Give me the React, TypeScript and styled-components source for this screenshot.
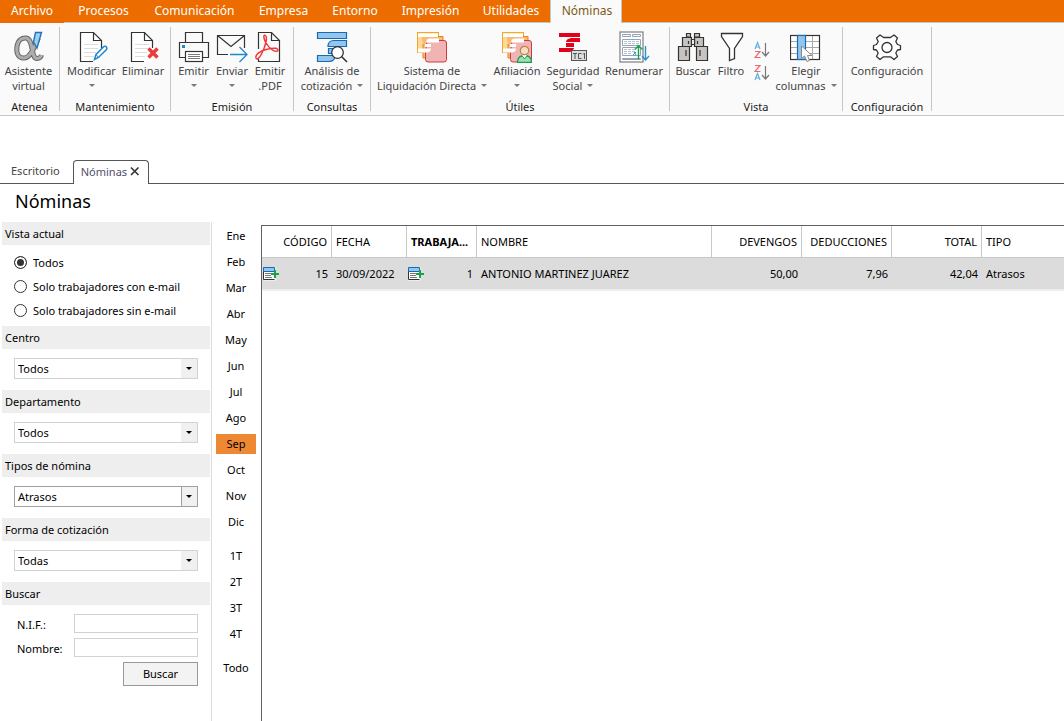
import React, { useState } from 'react';
import styled, { createGlobalStyle, css } from 'styled-components';

const GlobalStyle = createGlobalStyle`
  *, *::before, *::after { box-sizing: border-box; }
  html, body, #root { height: 100%; }
  body {
    margin: 0;
    background: #fff;
    color: #000;
    font-family: "Segoe UI", "Noto Sans", "Open Sans", sans-serif;
    font-size: 11px;
    line-height: 15px;
  }
  button, input, select { font: inherit; color: inherit; margin: 0; }
`;

const Page = styled.div`
  display: flex;
  flex-direction: column;
  min-height: 100%;
`;

/* ---------- main menu ---------- */

const MenuBar = styled.nav`
  display: flex;
  height: 23px;
  background: #ed6c00;
  border-bottom: 1px solid #c6c6c6;
`;

const MenuTab = styled.button<{ $width: number; $kind?: 'file' | 'active' }>`
  flex: none;
  width: ${p => p.$width}px;
  padding: 0 0 2px 2px;
  border: 0;
  height: 22px;
  background: none;
  color: #fff;
  font-size: 12px;
  text-align: center;
  white-space: nowrap;
  ${p => p.$kind === 'file' && css`
    height: 23px;
    padding-left: 0;
    background: #ed6c00;
  `}
  ${p => p.$kind === 'active' && css`
    height: 23px;
    background: #fafafa;
    color: #7d5a14;
    border-left: 1px solid #c6c6c6;
    border-right: 1px solid #c6c6c6;
  `}
`;

/* ---------- ribbon ---------- */

const Ribbon = styled.div`
  display: flex;
  height: 93px;
  padding-top: 4px;
  background: #fafafa;
  border-bottom: 1px solid #c6c6c6;
`;

const Group = styled.section<{ $width: number }>`
  flex: none;
  display: flex;
  flex-direction: column;
  width: ${p => p.$width}px;
  height: 84px;
  border-right: 1px solid #c6c6c6;
`;

const GroupItems = styled.div`
  flex: none;
  display: flex;
  height: 72px;
  padding: 4px 3px 0;
`;

const GroupLabel = styled.h2`
  margin: 0;
  line-height: 15px;
  text-align: center;
  font-size: 11px;
  font-weight: 400;
  color: #1a1a1a;
`;

const Tool = styled.button<{ $width: number }>`
  flex: none;
  display: flex;
  flex-direction: column;
  align-items: center;
  width: ${p => p.$width}px;
  padding: 0;
  border: 0;
  background: none;
  color: #444;
  white-space: nowrap;
`;

const ToolIcon = styled.svg.attrs({ viewBox: '0 0 32 32', 'aria-hidden': true })`
  display: block;
  width: 32px;
  height: 32px;
  fill: none;
`;

const ToolLine = styled.span`
  display: flex;
  align-items: center;
  justify-content: center;
  gap: 5px;
  height: 15px;
`;

const Caret = styled.span`
  border: 3px solid transparent;
  border-top-color: #777;
  border-bottom: 0;
`;

const SortStack = styled.div`
  flex: none;
  display: flex;
  flex-direction: column;
  gap: 5px;
  width: 26px;
  padding: 10px 0 0 5px;
`;

const SortButton = styled.button`
  display: block;
  width: 16px;
  height: 18px;
  padding: 0;
  border: 0;
  background: none;
  svg { display: block; }
`;

/* ---------- document tabs ---------- */

const DocTabs = styled.div`
  display: flex;
  align-items: flex-end;
  height: 68px;
  border-bottom: 1px solid #555;
`;

const DocTab = styled.div<{ $active?: boolean }>`
  display: flex;
  align-items: center;
  gap: 3px;
  height: 23px;
  padding: 0 13px 2px 11px;
  color: #444;
  ${p => p.$active && css`
    height: 24px;
    padding: 0 8px 3px 7px;
    margin-bottom: -1px;
    background: #fff;
    border: 1px solid #555;
    border-bottom: 0;
    border-radius: 4px 4px 0 0;
    color: #50506a;
  `}
`;

const CloseButton = styled.button`
  display: flex;
  width: 10px;
  height: 10px;
  padding: 0;
  border: 0;
  background: none;
`;

const Title = styled.h1`
  margin: 0;
  height: 38px;
  padding-left: 15px;
  font-size: 18px;
  line-height: 34px;
  font-weight: 400;
`;

/* ---------- workspace ---------- */

const Workspace = styled.main`
  flex: 1;
  display: flex;
`;

const Sidebar = styled.aside`
  flex: none;
  width: 212px;
  padding: 0 1px 0 2px;
  border-right: 1px solid #dcdcdc;
`;

const Panel = styled.section`
  display: flex;
  flex-direction: column;
`;

const PanelTitle = styled.h2`
  margin: 0;
  height: 23px;
  padding-left: 3px;
  background: #eee;
  font-size: 11px;
  line-height: 23px;
  font-weight: 400;
`;

const RadioList = styled.div`
  display: flex;
  flex-direction: column;
  padding: 5px 0 4px 12px;
`;

const RadioLabel = styled.label`
  display: flex;
  align-items: center;
  gap: 6px;
  height: 24px;
`;

const Radio = styled.input.attrs({ type: 'radio' })`
  appearance: none;
  width: 13px;
  height: 13px;
  border: 1px solid #333;
  border-radius: 50%;
  background: #fff;
  &:checked {
    background: #333;
    box-shadow: inset 0 0 0 2px #fff;
  }
`;

const SelectBox = styled.div<{ $strong?: boolean }>`
  display: grid;
  height: 21px;
  margin: 9px 12px 11px;
  border: 1px solid ${p => (p.$strong ? '#a0a0a0' : '#d2d2d2')};
  > * { grid-area: 1 / 1; }
`;

const Select = styled.select`
  appearance: none;
  width: 100%;
  height: 19px;
  padding: 0 20px 0 3px;
  border: 0;
  border-radius: 0;
  background: #fff;
`;

const SelectArrow = styled.span<{ $strong?: boolean }>`
  display: flex;
  align-items: center;
  justify-content: center;
  justify-self: end;
  width: 16px;
  height: 19px;
  padding-right: 1px;
  border-left: 1px solid ${p => (p.$strong ? '#a0a0a0' : '#f0f0f0')};
  background: #f0f0f0;
  pointer-events: none;
  &::after {
    content: '';
    border: 3px solid transparent;
    border-top-color: #000;
    border-bottom: 0;
  }
`;

const SearchForm = styled.form`
  display: flex;
  flex-direction: column;
  gap: 5px;
  padding: 9px 12px 0 15px;
`;

const Field = styled.label`
  display: flex;
  align-items: center;
  height: 19px;
  span { width: 57px; padding-top: 2px; }
`;

const TextInput = styled.input`
  flex: 1;
  min-width: 0;
  height: 19px;
  padding: 0 3px;
  border: 1px solid #d2d2d2;
  background: #fff;
`;

const SearchButton = styled.button`
  align-self: flex-end;
  width: 75px;
  height: 24px;
  padding: 0 0 2px;
  border: 1px solid #999;
  background: #f3f3f3;
`;

const Periods = styled.nav`
  flex: none;
  display: flex;
  flex-direction: column;
  gap: 8px;
  width: 49px;
  padding: 1px 5px 0 4px;
`;

const PeriodBlock = styled.div`
  display: flex;
  flex-direction: column;
`;

const Period = styled.button<{ $active: boolean }>`
  height: 20px;
  margin: 3px 0;
  padding: 0 0 2px;
  border: 0;
  background: ${p => (p.$active ? '#ef8833' : 'none')};
  text-align: center;
`;

const GridArea = styled.div`
  flex: 1;
  min-width: 0;
  margin-top: 3px;
  border-top: 1px solid #616161;
  border-left: 1px solid #616161;
  overflow: hidden;
`;

const Grid = styled.table`
  width: 100%;
  table-layout: fixed;
  border-collapse: separate;
  border-spacing: 0;
`;

const HeadCell = styled.th<{ $right?: boolean; $bold?: boolean; $width?: number }>`
  width: ${p => (p.$width ? `${p.$width}px` : 'auto')};
  height: 32px;
  padding: 0 4px;
  border-right: 1px solid #c8c8c8;
  border-bottom: 1px solid #c8c8c8;
  font-size: 11px;
  font-weight: ${p => (p.$bold ? 700 : 400)};
  text-align: ${p => (p.$right ? 'right' : 'left')};
  white-space: nowrap;
  overflow: hidden;
  &:last-child { border-right: 0; }
`;

const Cell = styled.td<{ $right?: boolean }>`
  height: 33px;
  padding: 0 4px;
  background: #dcdcdc;
  border-bottom: 2px solid #eee;
  font-size: 11px;
  text-align: ${p => (p.$right ? 'right' : 'left')};
  white-space: nowrap;
`;

const LinkedValue = styled.div`
  display: flex;
  align-items: center;
  justify-content: space-between;
  margin-left: -3px;
`;

/* ---------- icons ---------- */

const INK = '#333';
const BLUE = '#2b8fd6';

const Sheet = () => (
  <>
    <path d="M4.500 1.500H17.500L26 10V30.500H4.500Z" fill="#fff" stroke="none" />
    <path d="M17 30.500H4.500V1.500H17.500L25.500 9.500V17M17.500 1.500V9.500H25.500" stroke={INK} strokeWidth="1.200" />
    <path d="M8 13.500H22M8 17.500H22M8 21.500H20M8 25.500H18" stroke="#ddd" />
  </>
);

const SistemaStack = () => (
  <>
    <rect x="1.500" y="1.500" width="21" height="20" fill="#fdd997" stroke="#efa92e" />
    <path d="M5.500 5.500H27V27H7V13" fill="#f8bb77" stroke="#e58320" />
    <path d="M11 9.500H28q2.500 0 2.500 2.500V28.500q0 2.500-2.500 2.500H12q-2.500 0-2.500-2.500V22Z" fill="#f1b4b4" stroke="#cf3a41" />
    <path d="M2 2.500H22V6H2ZM14 7.500H23V11.500H10Q10 7.500 14 7.500ZM9 13H15V16H9ZM2 17.500H15Q15 21 11 21.500H2Z" fill="#fff" />
  </>
);

const icons: Record<string, React.ReactNode> = {
  alpha: (
    <>
      <path d="M25.500 7C22 13 19 26 11.500 27C5 27.500 3 22 4 15.500C5 9 9 6.500 13 7C21 8 17.500 27.500 24 27.500C27 27.500 28 26 28.500 24" stroke="#666" strokeWidth="5" />
      <path d="M25.500 7C22 13 19 26 11.500 27C5 27.500 3 22 4 15.500C5 9 9 6.500 13 7C21 8 17.500 27.500 24 27.500C27 27.500 28 26 28.500 24" stroke="#adadad" strokeWidth="3" />
      <path d="M22.500 1.500H28.500L24 17L20.500 11Z" fill="#9fd0f0" stroke="#2273b5" strokeWidth="1.400" />
    </>
  ),
  edit: (
    <>
      <Sheet />
      <path d="M18.500 28.500L20 23.500L28 15.500Q29.500 15 30.500 16Q31.200 17.500 30.500 18.500L22.500 26.500Z" fill="#fff" stroke="#1f87cc" strokeWidth="1.500" />
      <path d="M20 23.500L22.500 26.500" stroke="#1f87cc" />
    </>
  ),
  remove: (
    <>
      <Sheet />
      <path d="M22 18L30 26M30 18L22 26" stroke="#fafafa" strokeWidth="6" />
      <path d="M21.500 17.500L30.500 26.500M30.500 17.500L21.500 26.500" stroke="#ee3a3a" strokeWidth="3.400" />
    </>
  ),
  printer: (
    <>
      <path d="M7.500 11V1.500H24.500V11M7 26.500H1.500V11.500H30.500V26.500H25" stroke={INK} strokeWidth="1.200" />
      <rect x="7.500" y="20.500" width="17" height="10" fill="#fff" stroke={INK} strokeWidth="1.200" />
      <path d="M10 23.500H22M10 25.500H22M10 27.500H22" stroke="#777" />
      <rect x="4" y="14" width="3" height="3" fill="#1f87cc" />
    </>
  ),
  mail: (
    <>
      <path d="M12 23.500H1.500V4.500H28.500V17M1.500 4.500L15 15.500L28.500 4.500" stroke={INK} strokeWidth="1.200" />
      <path d="M14 23.500H30.500M23.500 16L31 23.500L23.500 31" stroke="#1f87cc" strokeWidth="1.300" />
    </>
  ),
  pdf: (
    <>
      <path d="M4.500 18V1.500H17.500L25.500 9.500V30.500H4.500V28M17.500 1.500V9.500H25.500" stroke={INK} strokeWidth="1.200" />
      <path d="M2 27C1 23 7 19.500 14 18C20 16.500 24.500 17 24 19.500C23 22 16 19 12 12C8.500 5 10 3.500 11.500 4.500C14 6.500 11 16 8 22C5.500 27 3 29.500 2 27Z" stroke="#ee3a3a" strokeWidth="1.500" />
    </>
  ),
  analysis: (
    <>
      <g fill="#92c6ee" stroke="#1a69b3" strokeWidth="1.200">
        <path d="M1.500 1.500H30.500V7.500H1.500Z" />
        <path d="M18 9.500H30.500V15.500H12Q12 9.500 18 9.500Z" />
        <path d="M12.500 17.500H19V22.500H12.500Z" />
        <path d="M1.500 24.500H19Q19 30.500 13 30.500H1.500Z" />
      </g>
      <circle cx="21.500" cy="21.500" r="5.800" fill="#fff" stroke={INK} strokeWidth="1.300" />
      <path d="M25.500 25.500L31 31" stroke={INK} strokeWidth="1.600" />
    </>
  ),
  system: <SistemaStack />,
  affiliation: (
    <>
      <SistemaStack />
      <path d="M16.500 31.500Q16.500 24.500 23.500 24.500T30.500 31.500Z" fill="#a5dcb8" stroke="#18a24b" strokeWidth="1.300" />
      <path d="M20.500 24L23.500 28L26.500 24" fill="#fff" stroke="#18a24b" />
      <circle cx="23.500" cy="19.500" r="4.200" fill="#fadcc0" stroke="#bd8350" strokeWidth="1.200" />
    </>
  ),
  social: (
    <>
      <path d="M2 2H23V6H2ZM14 7H23V11H9Q9 8 14 7ZM9 12H17V16H9ZM2 17H17Q16 21 12 21H2Z" fill="#e2001a" />
      <rect x="14.500" y="19.500" width="15" height="10" fill="#ddd" stroke="#555" />
      <path d="M16 22.500H20M18 22V28M24.500 22.500H21.500V27.500H24.500M26 23.500L27.500 22V28" stroke="#555" />
    </>
  ),
  renumber: (
    <>
      <rect x="2" y="1" width="23" height="30" fill="#fff" stroke="#888" strokeWidth="1.300" />
      <g stroke="#93a3b8">
        <path d="M4.500 3.500H12.500V5.500H4.500ZM14.500 3.500H22.500V5.500H14.500ZM4.500 8.500H22.500V14.500H4.500ZM4.500 16.500H22.500V24.500H4.500ZM4.500 27.500H22.500V28.500H4.500Z" />
        <path d="M6 10.500H21M6 12.500H21M6 18.500H18M6 20.500H18M6 22.500H14" strokeDasharray="3 1" stroke="#b8c3d0" />
      </g>
      <path d="M20.500 28V15M17 18.500L20.500 14.500L24.500 18.500" stroke="#18a24b" strokeWidth="1.400" />
      <path d="M27.500 15V28.500M24 25L27.500 29L31 25" stroke={BLUE} strokeWidth="1.400" />
      <path d="M16 21L18 24M18 21L15 24" stroke={BLUE} />
    </>
  ),
  binoculars: (
    <g fill="#c6c3c1" stroke={INK} strokeWidth="1.200">
      <path d="M9.500 2.500H13.500V6H9.500ZM17.500 2.500H22.500V6H17.500Z" />
      <path d="M5.500 6.500H14.500V15.500H5.500ZM17.500 6.500H26.500V15.500H17.500Z" />
      <path d="M14.500 8.500H17.500V13.500H14.500Z" fill="#fff" />
      <path d="M1.500 15.500H12.500V29.500H1.500ZM19.500 15.500H30.500V29.500H19.500Z" />
      <path d="M11.500 10V13M20.500 10V13M9 19V25M23 19V25" />
    </g>
  ),
  filter: (
    <path d="M6.500 2.500H27.500V5.500L19.500 17.500V27.500L14.500 29.500V17.500L6.500 5.500Z" fill="#fff" stroke={INK} strokeWidth="1.300" />
  ),
  columns: (
    <>
      <g>
        <rect x="0.500" y="4.500" width="29" height="24" fill="#fff" />
        <path d="M1 10.500H29M1 16.500H29M1 22.500H29M22.500 5V28" stroke="#aaa" />
        <rect x="0.500" y="4.500" width="29" height="24" stroke={INK} strokeWidth="1.200" />
        <rect x="7.500" y="4.500" width="8" height="24" fill="#92c6ee" stroke="#1a69b3" strokeWidth="1.200" />
      </g>
      <path d="M11.500 15V27.500L14.500 25L17 30.500L19.500 29.500L17.500 24.500H22Z" fill="#fff" stroke="#888" />
    </>
  ),
  gear: (
    <g stroke={INK} strokeWidth="1.300" strokeLinejoin="round">
      <path d="M29.500 14.500V18.500L26.500 19L24.800 22L26.500 25.500L23 28.500L19.500 25.800H12.500L9 28.500L5.500 25.500L7.200 22L5.500 19L2.500 18.500V14.500L5.500 13.500L7.200 10.500L5.500 7L9 4L12.500 6.500H19.500L23 4L26.500 7L24.800 10.500L26.500 13.500Z" fill="#fff" />
      <circle cx="16" cy="16.500" r="5" />
    </g>
  ),
};

const SortIcon = ({ reverse }: { reverse?: boolean }) => (
  <svg width="16" height="18" viewBox="0 0 16 18" fill="none" aria-hidden="true">
    <path d={reverse ? 'M1 16L3.500 9.500L6 16M2 14H5' : 'M1 8L3.500 1.500L6 8M2 6H5'} stroke="#62aede" strokeWidth="1.200" />
    <path d={reverse ? 'M1 1.500H6L1 7.500H6.500' : 'M1 10.500H6L1 16.500H6.500'} stroke="#f06a70" strokeWidth="1.200" />
    <path d="M11.500 2V14.500M8 11L11.500 15L15 11" stroke="#777" strokeWidth="1.200" />
  </svg>
);

const RecordIcon = () => (
  <svg width="16" height="14" viewBox="0 0 16 14" fill="none" aria-hidden="true">
    <path d="M0.500 0.500H12.500V13.500H0.500Z" fill="#fff" />
    <path d="M0.500 4V12.500H11.500" stroke="#333" />
    <path d="M0.500 0.500H11.500V4.500H0.500Z" fill="#92c6ee" stroke="#1a69b3" />
    <path d="M2 6.500H8M2 8.500H8M2 10.500H9" stroke="#777" />
    <path d="M12 3V11M8 7H16" stroke="#18a24b" strokeWidth="2" />
  </svg>
);

/* ---------- data ---------- */

type ToolSpec = { icon: string; width: number; lines: string[]; menu?: 'inline' | 'below' };

const groups: { name: string; width: number; tools: ToolSpec[] }[] = [
  { name: 'Atenea', width: 60, tools: [{ icon: 'alpha', width: 51, lines: ['Asistente', 'virtual'] }] },
  {
    name: 'Mantenimiento', width: 111, tools: [
      { icon: 'edit', width: 57, lines: ['Modificar'], menu: 'below' },
      { icon: 'remove', width: 46, lines: ['Eliminar'] },
    ],
  },
  {
    name: 'Emisión', width: 123, tools: [
      { icon: 'printer', width: 39, lines: ['Emitir'], menu: 'below' },
      { icon: 'mail', width: 38, lines: ['Enviar'], menu: 'below' },
      { icon: 'pdf', width: 38, lines: ['Emitir', '.PDF'] },
    ],
  },
  { name: 'Consultas', width: 77, tools: [{ icon: 'analysis', width: 70, lines: ['Análisis de', 'cotización'], menu: 'inline' }] },
  {
    name: 'Útiles', width: 299, tools: [
      { icon: 'system', width: 116, lines: ['Sistema de', 'Liquidación Directa'], menu: 'inline' },
      { icon: 'affiliation', width: 54, lines: ['Afiliación'], menu: 'below' },
      { icon: 'social', width: 58, lines: ['Seguridad', 'Social'], menu: 'inline' },
      { icon: 'renumber', width: 64, lines: ['Renumerar'] },
    ],
  },
  {
    name: 'Vista', width: 173, tools: [
      { icon: 'binoculars', width: 40, lines: ['Buscar'] },
      { icon: 'filter', width: 36, lines: ['Filtro'] },
      { icon: 'sort', width: 26, lines: [] },
      { icon: 'columns', width: 62, lines: ['Elegir', 'columnas'], menu: 'inline' },
    ],
  },
  { name: 'Configuración', width: 89, tools: [{ icon: 'gear', width: 82, lines: ['Configuración'] }] },
];

const menu: [string, number][] = [
  ['Archivo', 64], ['Procesos', 77], ['Comunicación', 105], ['Empresa', 73],
  ['Entorno', 70], ['Impresión', 81], ['Utilidades', 80], ['Nóminas', 72],
];

const periods = [
  ['Ene', 'Feb', 'Mar', 'Abr', 'May', 'Jun', 'Jul', 'Ago', 'Sep', 'Oct', 'Nov', 'Dic'],
  ['1T', '2T', '3T', '4T'],
  ['Todo'],
];

const filters = [
  { name: 'Centro', value: 'Todos' },
  { name: 'Departamento', value: 'Todos' },
  { name: 'Tipos de nómina', value: 'Atrasos', strong: true },
  { name: 'Forma de cotización', value: 'Todas' },
];

const views = ['Todos', 'Solo trabajadores con e-mail', 'Solo trabajadores sin e-mail'];

/* ---------- components ---------- */

const RibbonTool = ({ tool }: { tool: ToolSpec }) => {
  if (tool.icon === 'sort') {
    return (
      <SortStack>
        <SortButton aria-label="Orden ascendente"><SortIcon /></SortButton>
        <SortButton aria-label="Orden descendente"><SortIcon reverse /></SortButton>
      </SortStack>
    );
  }
  const last = tool.lines.length - 1;
  return (
    <Tool $width={tool.width}>
      <ToolIcon>{icons[tool.icon]}</ToolIcon>
      {tool.lines.map((line, i) => (
        <ToolLine key={line}>
          {line}
          {tool.menu === 'inline' && i === last && <Caret />}
        </ToolLine>
      ))}
      {tool.menu === 'below' && <ToolLine><Caret /></ToolLine>}
    </Tool>
  );
};

export default function App() {
  const [view, setView] = useState(views[0]);
  const [period, setPeriod] = useState('Sep');

  return (
    <Page>
      <GlobalStyle />
      <MenuBar>
        {menu.map(([name, width]) => (
          <MenuTab
            key={name}
            $width={width}
            $kind={name === 'Archivo' ? 'file' : name === 'Nóminas' ? 'active' : undefined}
          >
            {name}
          </MenuTab>
        ))}
      </MenuBar>
      <Ribbon>
        {groups.map(group => (
          <Group key={group.name} $width={group.width}>
            <GroupItems>
              {group.tools.map(tool => <RibbonTool key={tool.icon} tool={tool} />)}
            </GroupItems>
            <GroupLabel>{group.name}</GroupLabel>
          </Group>
        ))}
      </Ribbon>

      <DocTabs>
        <DocTab>Escritorio</DocTab>
        <DocTab $active>
          Nóminas
          <CloseButton aria-label="Cerrar">
            <svg width="10" height="10" viewBox="0 0 10 10" aria-hidden="true">
              <path d="M1 1.500L8.500 9M8.500 1.500L1 9" stroke="#333" strokeWidth="1.600" />
            </svg>
          </CloseButton>
        </DocTab>
      </DocTabs>
      <Title>Nóminas</Title>

      <Workspace>
        <Sidebar>
          <Panel>
            <PanelTitle>Vista actual</PanelTitle>
            <RadioList>
              {views.map(name => (
                <RadioLabel key={name}>
                  <Radio name="vista" checked={view === name} onChange={() => setView(name)} />
                  {name}
                </RadioLabel>
              ))}
            </RadioList>
          </Panel>
          {filters.map(filter => (
            <Panel key={filter.name}>
              <PanelTitle>{filter.name}</PanelTitle>
              <SelectBox $strong={filter.strong}>
                <Select aria-label={filter.name} defaultValue={filter.value}>
                  <option>{filter.value}</option>
                </Select>
                <SelectArrow $strong={filter.strong} />
              </SelectBox>
            </Panel>
          ))}
          <Panel>
            <PanelTitle>Buscar</PanelTitle>
            <SearchForm onSubmit={e => e.preventDefault()}>
              <Field><span>N.I.F.:</span><TextInput type="text" /></Field>
              <Field><span>Nombre:</span><TextInput type="text" /></Field>
              <SearchButton type="submit">Buscar</SearchButton>
            </SearchForm>
          </Panel>
        </Sidebar>

        <Periods>
          {periods.map(block => (
            <PeriodBlock key={block[0]}>
              {block.map(name => (
                <Period key={name} $active={period === name} onClick={() => setPeriod(name)}>
                  {name}
                </Period>
              ))}
            </PeriodBlock>
          ))}
        </Periods>

        <GridArea>
          <Grid>
            <thead>
              <tr>
                <HeadCell $width={70} $right>CÓDIGO</HeadCell>
                <HeadCell $width={75}>FECHA</HeadCell>
                <HeadCell $width={70} $bold>TRABAJA...</HeadCell>
                <HeadCell $width={235}>NOMBRE</HeadCell>
                <HeadCell $width={90} $right>DEVENGOS</HeadCell>
                <HeadCell $width={90} $right>DEDUCCIONES</HeadCell>
                <HeadCell $width={90} $right>TOTAL</HeadCell>
                <HeadCell>TIPO</HeadCell>
              </tr>
            </thead>
            <tbody>
              <tr>
                <Cell><LinkedValue><RecordIcon />15</LinkedValue></Cell>
                <Cell>30/09/2022</Cell>
                <Cell><LinkedValue><RecordIcon />1</LinkedValue></Cell>
                <Cell>ANTONIO MARTINEZ JUAREZ</Cell>
                <Cell $right>50,00</Cell>
                <Cell $right>7,96</Cell>
                <Cell $right>42,04</Cell>
                <Cell>Atrasos</Cell>
              </tr>
            </tbody>
          </Grid>
        </GridArea>
      </Workspace>
    </Page>
  );
}
